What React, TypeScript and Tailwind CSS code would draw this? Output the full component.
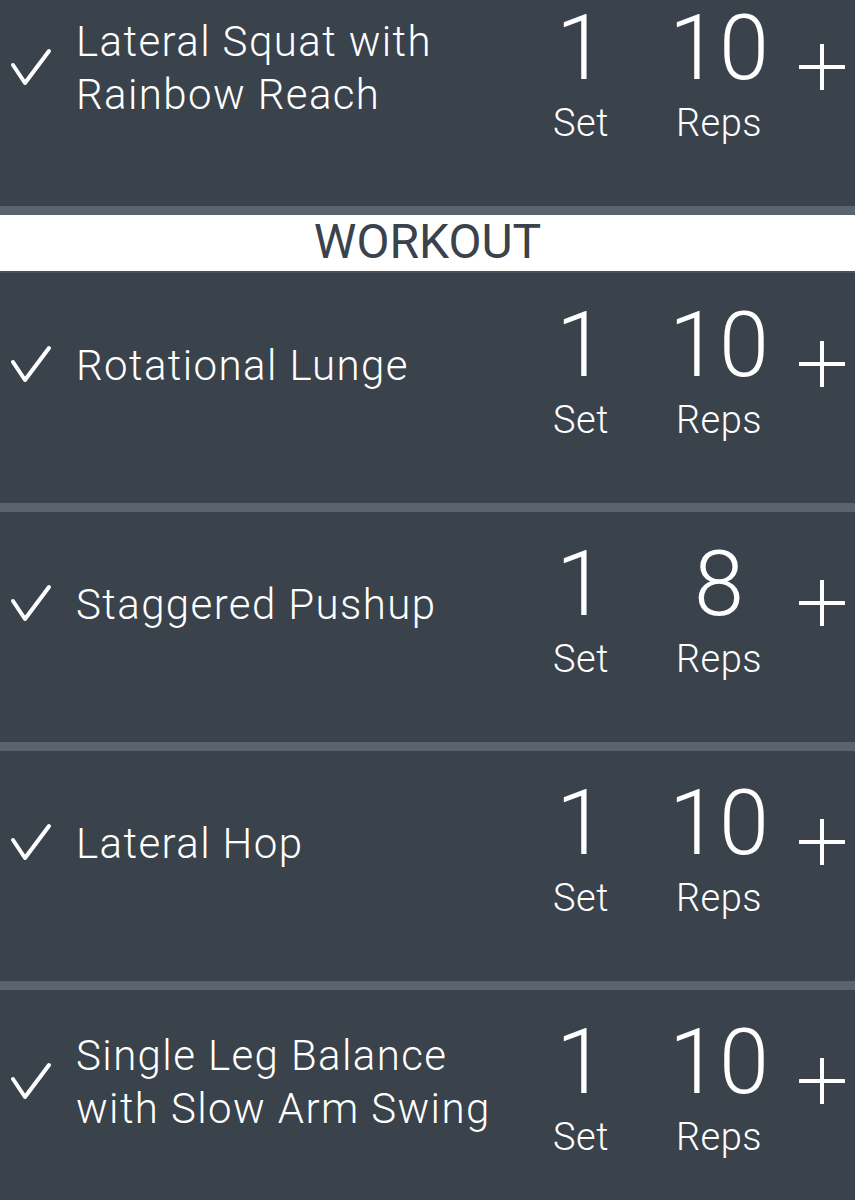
const exercises = [
  { name: ["Lateral Squat with", "Rainbow Reach"], sets: 1, reps: 10 },
];

const workout = [
  { name: ["Rotational Lunge"], sets: 1, reps: 10 },
  { name: ["Staggered Pushup"], sets: 1, reps: 8 },
  { name: ["Lateral Hop"], sets: 1, reps: 10 },
  { name: ["Single Leg Balance", "with Slow Arm Swing"], sets: 1, reps: 10 },
];

type Exercise = { name: string[]; sets: number; reps: number };

function Check() {
  return (
    <svg width="42" height="40" viewBox="0 0 42 40" fill="none">
      <path
        d="M3 17 L15 35 L39 3"
        stroke="white"
        strokeWidth="4"
        strokeLinecap="round"
        strokeLinejoin="round"
      />
    </svg>
  );
}

function Plus() {
  return (
    <svg width="46" height="46" viewBox="0 0 46 46" fill="none">
      <path d="M23 1 V45 M1 23 H45" stroke="white" strokeWidth="4" strokeLinecap="round" />
    </svg>
  );
}

function Row({ ex, first }: { ex: Exercise; first?: boolean }) {
  return (
    <div
      className={`flex h-[230px] items-start bg-[#3a424b] text-white ${first ? "-mt-[24px]" : ""}`}
    >
      {/* name */}
      <div className="flex h-[184px] flex-1 items-center pl-[10px]">
        <Check />
        <div className="ml-[24px] text-[42px] font-light leading-[53px] tracking-[1.4px]">
          {ex.name.map((l) => (
            <div key={l}>{l}</div>
          ))}
        </div>
      </div>

      {/* counts */}
      <div className="flex pt-[28px]">
        <div className="flex w-[100px] flex-col items-center">
          <span className="text-[90px] font-light leading-[90px]">{ex.sets}</span>
          <span className="mt-[5px] text-[38px] font-light leading-[48px] tracking-[0.5px]">Set</span>
        </div>
        <div className="ml-[28px] flex w-[120px] flex-col items-center">
          <span className="text-[90px] font-light leading-[90px]">{ex.reps}</span>
          <span className="mt-[5px] text-[38px] font-light leading-[48px] tracking-[0.5px]">Reps</span>
        </div>
      </div>

      <div className="ml-[20px] mr-[10px] flex h-[182px] items-center">
        <Plus />
      </div>
    </div>
  );
}

function Divider() {
  return <div className="h-[9px] bg-[#5b636c]" />;
}

export default function App() {
  return (
    <div
      className="h-[1200px] w-[855px] overflow-hidden bg-[#3a424b]"
      style={{ fontFamily: "Roboto, 'Noto Sans', sans-serif" }}
    >
      {exercises.map((ex) => (
        <Row key={ex.name[0]} ex={ex} first />
      ))}
      <Divider />
      <div className="flex h-[58px] items-center justify-center border-b-2 border-[#4a525b] bg-white pb-[2px] text-[48px] font-normal leading-none text-[#3a424b]">
        WORKOUT
      </div>
      {workout.map((ex, i) => (
        <div key={ex.name[0]}>
          {i > 0 && <Divider />}
          <Row ex={ex} />
        </div>
      ))}
    </div>
  );
}
